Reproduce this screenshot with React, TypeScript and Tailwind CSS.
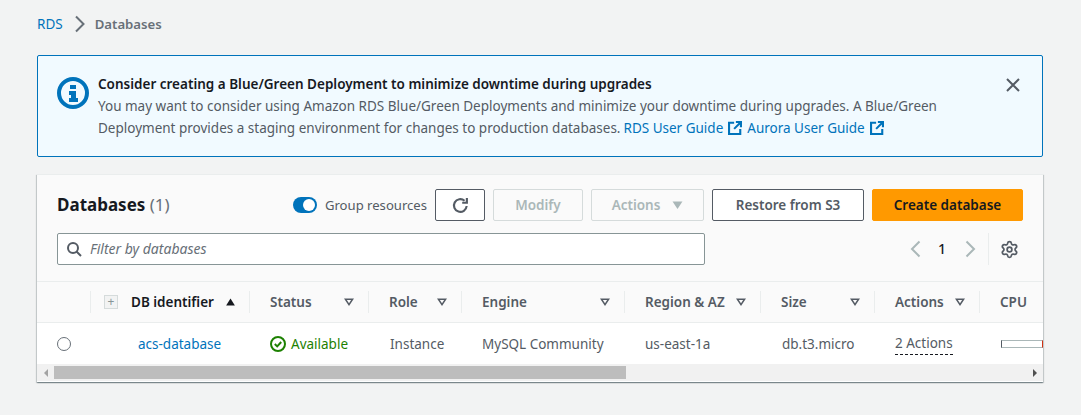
import { ReactNode } from "react";
import { Settings } from "lucide-react";

const font = "font-['Noto_Sans',sans-serif]";

const ExternalIcon = () => (
  <svg viewBox="0 0 16 16" className="w-[14px] h-[14px] shrink-0" fill="none" stroke="#0073bb" strokeWidth="2.4">
    <path d="M7 2H1.2v12.8H14V9" />
    <path d="M9 1.2h5.8V7M14.8 1.2L7 9" />
  </svg>
);

const FilterCaret = () => (
  <svg viewBox="0 0 12 10" className="w-[10px] h-[8px] shrink-0" fill="none" stroke="#545b64" strokeWidth="1.9">
    <path d="M1.5 1.5h9L6 8.2z" />
  </svg>
);

const HeaderCell = ({ label, width, last }: { label: string; width: string; last?: boolean }) => (
  <div className={`${width} shrink-0 flex items-center justify-between pl-[20px] pr-[14px] h-[22px] ${last ? "" : "border-r border-[#eaeded]"}`}>
    <span className="font-semibold text-[13.5px] text-[#545b64]">{label}</span>
    {!last && <FilterCaret />}
  </div>
);

const BodyCell = ({ width, children, inset }: { width: string; children: ReactNode; inset?: boolean }) => (
  <div className={`${width} shrink-0 ${inset ? "pl-[21px]" : "pl-[20px]"} text-[#545b64] whitespace-nowrap`}>{children}</div>
);

const Button = ({ width, children, kind }: { width: string; children: ReactNode; kind?: "primary" | "disabled" }) => {
  const look =
    kind === "primary"
      ? "bg-[#ff9900] border-[#ff9900] text-[#16191f]"
      : kind === "disabled"
      ? "bg-transparent border-[#d5dbdb] text-[#aab7b8]"
      : "bg-white border-[#545b64] text-[#545b64]";
  return (
    <div className={`${width} h-[32px] rounded-[2px] border flex items-center justify-center font-semibold text-[13.5px] ${look}`}>
      {children}
    </div>
  );
};

export default function App() {
  return (
    <div className={`${font} w-[1081px] h-[415px] overflow-hidden bg-[#f2f3f3] text-[13.5px] leading-[22px] text-[#16191f] pt-[13px] pl-[37px]`}>
      {/* breadcrumb */}
      <div className="flex items-center h-[22px]">
        <span className="text-[#0073bb]">RDS</span>
        <svg viewBox="0 0 12 18" className="w-[12px] h-[18px] ml-[11px] mr-[9px]" fill="none" stroke="#687078" strokeWidth="2">
          <path d="M2 1.5L9.5 9 2 16.5" />
        </svg>
        <span className="font-semibold text-[13.2px] text-[#687078]">Databases</span>
      </div>

      {/* alert */}
      <div className="mt-[20px] w-[1006px] h-[102px] bg-[#f1faff] border border-[#0073bb] rounded-[2px] flex pl-[19px] pr-[21px] pt-[17px]">
        <svg viewBox="0 0 32 32" className="w-[32px] h-[32px] mt-[4px] shrink-0">
          <circle cx="16" cy="16" r="14" fill="none" stroke="#0073bb" strokeWidth="4" />
          <rect x="13" y="8" width="6" height="4" fill="#0073bb" />
          <path d="M12 14h7v7h2v4H12v-4h2v-3h-2z" fill="#0073bb" />
        </svg>
        <div className="ml-[9px] w-[880px] leading-[22px] text-[#545b64]">
          <div className="font-semibold text-[#16191f]">Consider creating a Blue/Green Deployment to minimize downtime during upgrades</div>
          <div>You may want to consider using Amazon RDS Blue/Green Deployments and minimize your downtime during upgrades. A Blue/Green</div>
          <div className="flex items-center">
            <span>Deployment provides a staging environment for changes to production databases.</span>
            <span className="ml-[3px] text-[#0073bb]">RDS User Guide</span>
            <span className="ml-[5px]"><ExternalIcon /></span>
            <span className="ml-[5px] text-[#0073bb]">Aurora User Guide</span>
            <span className="ml-[5px]"><ExternalIcon /></span>
          </div>
        </div>
        <svg viewBox="0 0 16 16" className="w-[16px] h-[16px] ml-auto mt-[4px] shrink-0" fill="none" stroke="#545b64" strokeWidth="2">
          <path d="M2 2l12 12M14 2L2 14" />
        </svg>
      </div>

      {/* card */}
      <div className="mt-[17px] w-[1006px] h-[208px] bg-white border-t border-[#eaeded] shadow-[0_1px_1px_0_rgba(0,28,36,0.3),1px_1px_1px_0_rgba(0,28,36,0.15),-1px_1px_1px_0_rgba(0,28,36,0.15)] overflow-hidden">
        <div className="h-[107px] bg-[#fafafa] border-b border-[#eaeded] px-[20px] pt-[14px]">
          <div className="flex items-center h-[32px] gap-[8px]">
            <div className="text-[17px] font-bold mr-auto">
              Databases <span className="font-normal text-[#687078]">(1)</span>
            </div>
            <div className="relative w-[24px] h-[16px] rounded-full bg-[#0073bb]">
              <div className="absolute right-[2px] top-[2px] w-[12px] h-[12px] rounded-full bg-white" />
            </div>
            <span className="text-[13.1px] text-[#545b64]">Group resources</span>
            <Button width="w-[50px]">
              <svg viewBox="0 0 16 16" className="w-[17px] h-[17px]" fill="none" stroke="#545b64" strokeWidth="2">
                <path d="M13.8 8.5a6 6 0 1 1-2-5" />
                <path d="M14 1v4.4H9.6" />
              </svg>
            </Button>
            <Button width="w-[90px]" kind="disabled">Modify</Button>
            <Button width="w-[113px]" kind="disabled">
              Actions
              <svg viewBox="0 0 12 10" className="w-[11px] h-[9px] ml-[12px]">
                <path d="M0.5 0.5h11L6 9z" fill="#aab7b8" />
              </svg>
            </Button>
            <Button width="w-[152px]">Restore from S3</Button>
            <Button width="w-[151px]" kind="primary">Create database</Button>
          </div>
          <div className="flex items-center mt-[12px] h-[32px]">
            <div className="w-[648px] h-[32px] bg-white border border-[#879596] rounded-[2px] flex items-center pl-[8px]">
              <svg viewBox="0 0 16 16" className="w-[16px] h-[16px]" fill="none" stroke="#545b64" strokeWidth="2">
                <circle cx="7" cy="7" r="5" />
                <path d="M10.5 10.5L15 15" />
              </svg>
              <span className="ml-[8px] italic text-[14px] text-[#687078]">Filter by databases</span>
            </div>
            <svg viewBox="0 0 12 18" className="w-[12px] h-[18px] ml-[204px]" fill="none" stroke="#aab7b8" strokeWidth="2">
              <path d="M10.5 1.5L3 9l7.5 7.5" />
            </svg>
            <span className="ml-[17px] text-[14px] font-medium">1</span>
            <svg viewBox="0 0 12 18" className="w-[12px] h-[18px] ml-[19px]" fill="none" stroke="#aab7b8" strokeWidth="2">
              <path d="M1.5 1.5L9 9l-7.5 7.5" />
            </svg>
            <div className="ml-[11px] w-px h-[32px] bg-[#eaeded]" />
            <Settings size={19} color="#545b64" strokeWidth={2.2} className="ml-[11px]" />
          </div>
        </div>

        {/* table head */}
        <div className="h-[41px] bg-[#fafafa] border-b border-[#eaeded] flex items-center whitespace-nowrap">
          <div className="w-[54px] h-[22px] shrink-0 border-r border-[#eaeded]" />
          <div className="w-[159px] shrink-0 h-[22px] border-r border-[#eaeded] flex items-center pl-[13px]">
            <div className="w-[14px] h-[14px] bg-[#d5dbdb] p-[1px]">
              <div className="w-full h-full bg-[#f2f3f3] flex items-center justify-center text-[#879596] text-[12px] leading-none">+</div>
            </div>
            <span className="ml-[13px] font-semibold text-[#16191f]">DB identifier</span>
            <svg viewBox="0 0 12 10" className="w-[11px] h-[8px] ml-[11px]">
              <path d="M6 0.5L11.5 9.5H0.5z" fill="#16191f" />
            </svg>
          </div>
          <HeaderCell label="Status" width="w-[119px]" />
          <HeaderCell label="Role" width="w-[93px]" />
          <HeaderCell label="Engine" width="w-[163px]" />
          <HeaderCell label="Region & AZ" width="w-[136px]" />
          <HeaderCell label="Size" width="w-[114px]" />
          <HeaderCell label="Actions" width="w-[105px]" />
          <HeaderCell label="CPU" width="w-[63px]" last />
        </div>

        {/* row */}
        <div className="h-[41px] bg-white flex items-center overflow-hidden">
          <div className="w-[53px] shrink-0 pl-[20px]">
            <div className="w-[14px] h-[14px] rounded-full border border-[#687078] bg-white" />
          </div>
          <div className="w-[160px] shrink-0 pl-[48px] text-[#0073bb]">acs-database</div>
          <BodyCell width="w-[119px]">
            <span className="flex items-center text-[#1d8102]">
              <svg viewBox="0 0 16 16" className="w-[16px] h-[16px] mr-[5px]" fill="none" stroke="#1d8102" strokeWidth="2">
                <circle cx="8" cy="8" r="7" />
                <path d="M4.8 8l2.4 2.4 4-4.4" />
              </svg>
              Available
            </span>
          </BodyCell>
          <BodyCell width="w-[93px]" inset>Instance</BodyCell>
          <BodyCell width="w-[163px]">MySQL Community</BodyCell>
          <BodyCell width="w-[136px]">us-east-1a</BodyCell>
          <BodyCell width="w-[114px]" inset>db.t3.micro</BodyCell>
          <BodyCell width="w-[105px]">
            <span className="inline-block leading-[20px] pb-[1px] border-b border-dashed border-[#16191f]">2 Actions</span>
          </BodyCell>
          <div className="w-[63px] shrink-0 pl-[21px]">
            <div className="w-[42px] h-[8px] border border-[#aab7b8] border-l-[#545b64] border-r-[#d13212] bg-white" />
          </div>
        </div>

        {/* scrollbar */}
        <div className="h-[17px] bg-[#f1f1f1] flex items-center">
          <div className="w-[17px] flex justify-center shrink-0">
            <div className="w-0 h-0 border-y-[4px] border-y-transparent border-r-[4px] border-r-[#a3a3a3]" />
          </div>
          <div className="w-[572px] h-[13px] bg-[#bdbdbd]" />
          <div className="ml-auto w-[17px] flex justify-center shrink-0">
            <div className="w-0 h-0 border-y-[4px] border-y-transparent border-l-[4px] border-l-[#505050]" />
          </div>
        </div>
      </div>
    </div>
  );
}
